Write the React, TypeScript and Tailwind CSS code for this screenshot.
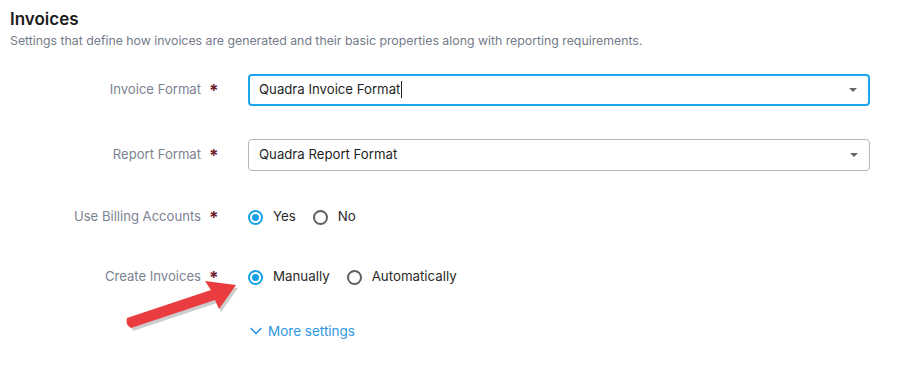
import { ChevronDown } from 'lucide-react';

function Caret() {
    return (
        <svg width="8" height="4" viewBox="0 0 8 4" className="mr-[11px]">
            <path d="M0 0 L8 0 L4 4 Z" fill="#666" />
        </svg>
    );
}

function Label({ text }: { text: string }) {
    return (
        <div className="w-[209px] flex items-center justify-end shrink-0 text-[13.1px] text-[#7b8392]">
            <span>{text}</span>
            <span className="ml-[8px] w-[10px] text-[#6e1d2e] text-[17px] font-bold leading-none mt-[3px]">*</span>
        </div>
    );
}

function Radio({ label, checked }: { label: string; checked?: boolean }) {
    return (
        <div className="flex items-center mr-[17px]">
            <span
                className={
                    checked
                        ? 'w-[15px] h-[15px] rounded-full border-2 border-[#14a0e6] flex items-center justify-center'
                        : 'w-[15px] h-[15px] rounded-full border-2 border-[#5f5f5f]'
                }
            >
                {checked && <span className="w-[7px] h-[7px] rounded-full bg-[#14a0e6]" />}
            </span>
            <span className="ml-[10px] text-[13.3px] text-[#2a2a2a]">{label}</span>
        </div>
    );
}

export default function App() {
    return (
        <div className="relative w-[900px] h-[365px] bg-white font-['Inter',sans-serif] overflow-hidden pl-[10px]">
            <h1 className="pt-[8px] text-[17px] leading-[22px] font-semibold text-[#1b1b1b]">Invoices</h1>
            <p className="mt-[4px] text-[12.3px] leading-[14px] text-[#737b88]">
                Settings that define how invoices are generated and their basic properties along with reporting requirements.
            </p>

            <div className="flex flex-col">
                <div className="flex items-center h-[32px] mt-[26px]">
                    <Label text="Invoice Format" />
                    <div className="ml-[29px] w-[622px] h-[32px] border-2 border-[#1ca6ee] rounded-[4px] flex items-center justify-between">
                        <span className="pl-[9px] text-[13.2px] text-[#1f1f1f] flex items-center">
                            Quadra Invoice Format
                            <span className="w-px h-[17px] bg-[#222] ml-[1px]" />
                        </span>
                        <Caret />
                    </div>
                </div>

                <div className="flex items-center h-[32px] mt-[33px]">
                    <Label text="Report Format" />
                    <div className="ml-[29px] w-[622px] h-[32px] border border-[#b5b5b5] rounded-[4px] flex items-center justify-between">
                        <span className="pl-[10px] text-[13.2px] text-[#1f1f1f]">Quadra Report Format</span>
                        <Caret />
                    </div>
                </div>

                <div className="flex items-center h-[32px] mt-[30px]">
                    <Label text="Use Billing Accounts" />
                    <div className="ml-[29px] flex items-center">
                        <Radio label="Yes" checked />
                        <Radio label="No" />
                    </div>
                </div>

                <div className="flex items-center h-[32px] mt-[28px]">
                    <Label text="Create Invoices" />
                    <div className="ml-[29px] flex items-center">
                        <Radio label="Manually" checked />
                        <Radio label="Automatically" />
                    </div>
                </div>

                <div className="flex items-center h-[32px] mt-[22px] pl-[236px]">
                    <ChevronDown size={20} strokeWidth={2} className="text-[#2f97e0]" />
                    <span className="ml-[2px] text-[13.5px] text-[#2f97e0]">More settings</span>
                </div>
            </div>

            <svg className="absolute left-0 top-0 pointer-events-none" width="900" height="365">
                <g transform="translate(2,3)" opacity="0.3">
                    <path d="M127 318 L211 290 L205 281 L236 285 L219 309 L215 300 L131 328 Z" fill="#555" />
                </g>
                <path
                    d="M127 318 L211 290 L205 281 L236 285 L219 309 L215 300 L131 328 Q125 325 127 318 Z"
                    fill="#ea3b3f"
                />
            </svg>
        </div>
    );
}
